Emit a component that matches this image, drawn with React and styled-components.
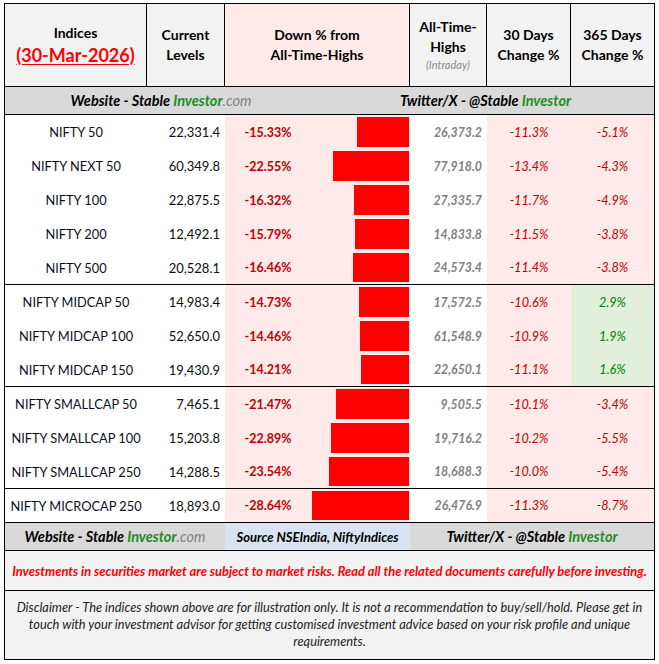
import React from 'react'
import styled, { createGlobalStyle } from 'styled-components'

const GlobalStyle = createGlobalStyle`
  body {
    margin: 0;
    background: #fff;
    font-family: Lato, "Open Sans", sans-serif;
  }
`

const groups = [
  [
    ['NIFTY 50', '22,331.4', 15.33, '26,373.2', '-11.3%', '-5.1%'],
    ['NIFTY NEXT 50', '60,349.8', 22.55, '77,918.0', '-13.4%', '-4.3%'],
    ['NIFTY 100', '22,875.5', 16.32, '27,335.7', '-11.7%', '-4.9%'],
    ['NIFTY 200', '12,492.1', 15.79, '14,833.8', '-11.5%', '-3.8%'],
    ['NIFTY 500', '20,528.1', 16.46, '24,573.4', '-11.4%', '-3.8%'],
  ],
  [
    ['NIFTY MIDCAP 50', '14,983.4', 14.73, '17,572.5', '-10.6%', '2.9%'],
    ['NIFTY MIDCAP 100', '52,650.0', 14.46, '61,548.9', '-10.9%', '1.9%'],
    ['NIFTY MIDCAP 150', '19,430.9', 14.21, '22,650.1', '-11.1%', '1.6%'],
  ],
  [
    ['NIFTY SMALLCAP 50', '7,465.1', 21.47, '9,505.5', '-10.1%', '-3.4%'],
    ['NIFTY SMALLCAP 100', '15,203.8', 22.89, '19,716.2', '-10.2%', '-5.5%'],
    ['NIFTY SMALLCAP 250', '14,288.5', 23.54, '18,688.3', '-10.0%', '-5.4%'],
  ],
  [
    ['NIFTY MICROCAP 250', '18,893.0', 28.64, '26,476.9', '-11.3%', '-8.7%'],
  ],
]

function Brand({ dotcom }) {
  return (
    <>
      Stable <Green>Investor</Green>
      {dotcom && <Gray>.com</Gray>}
    </>
  )
}

function App() {
  return (
    <Page>
      <GlobalStyle />
      <Table>
        <HeadRow>
          <HeadCell>
            <div>Indices</div>
            <DateText>(30-Mar-2026)</DateText>
          </HeadCell>
          <HeadCell>Current<br />Levels</HeadCell>
          <HeadCell $span={2} $bg="#ffe9e9">Down % from<br />All-Time-Highs</HeadCell>
          <HeadCell>
            <div>All-Time-<br />Highs</div>
            <Intraday>(Intraday)</Intraday>
          </HeadCell>
          <HeadCell>30 Days<br />Change %</HeadCell>
          <HeadCell $last>365 Days<br />Change %</HeadCell>
        </HeadRow>

        <Band>
          <BandText>Website - <Brand dotcom /></BandText>
          <BandText>Twitter/X - @<Brand /></BandText>
        </Band>

        {groups.map((rows, g) => (
          <Group key={g}>
            {rows.map(([name, level, down, ath, d30, d365]) => (
              <Row key={name}>
                <Name>{name}</Name>
                <Level>{level}</Level>
                <Down>-{down.toFixed(2)}%</Down>
                <BarCell>
                  <Bar style={{ width: Math.round(down * 3.39) }} />
                </BarCell>
                <Ath>{ath}</Ath>
                <Change>{d30}</Change>
                <Change $up={g === 1}>{d365}</Change>
              </Row>
            ))}
          </Group>
        ))}

        <FootBand>
          <FootCell $bg="#d9d9d9">Website - <Brand dotcom /></FootCell>
          <FootCell $bg="#dae3f3" $small>Source NSEIndia, NiftyIndices</FootCell>
          <FootCell $bg="#d9d9d9">Twitter/X - @<Brand /></FootCell>
        </FootBand>

        <Risk>
          Investments in securities market are subject to market risks. Read all the related documents carefully before investing.
        </Risk>

        <Disclaimer>
          Disclaimer - The indices shown above are for illustration only. It is not a recommendation to buy/sell/hold. Please get in touch with your investment advisor for getting customised investment advice based on your risk profile and unique requirements.
        </Disclaimer>
      </Table>
    </Page>
  )
}

export default App

const COLS = '142px 78px 86px 99px 77px 84px 1fr'

const Page = styled.div`
  padding: 3px 4px;
`

const Table = styled.div`
  width: 651px;
  border: 1px solid #000;
  box-sizing: border-box;
  color: #111;
`

const HeadRow = styled.div`
  display: grid;
  grid-template-columns: ${COLS};
  height: 82px;
  border-bottom: 1px solid #000;
`

const HeadCell = styled.div`
  grid-column: span ${({ $span }) => $span || 1};
  display: flex;
  flex-direction: column;
  align-items: center;
  justify-content: center;
  text-align: center;
  background: ${({ $bg }) => $bg || '#f2f2f2'};
  border-right: ${({ $last }) => ($last ? 'none' : '1px solid #000')};
  font-weight: 700;
  font-size: 14px;
  line-height: 20px;
  color: #000;
`

const DateText = styled.div`
  color: #ff0000;
  font-size: 18px;
  line-height: 24px;
  text-decoration: underline;
  text-underline-offset: 2px;
`

const Intraday = styled.div`
  font-size: 11px;
  line-height: 16px;
  font-style: italic;
  font-weight: 400;
  color: #8c8c8c;
`

const Band = styled.div`
  display: grid;
  grid-template-columns: 312px 1fr;
  height: 27px;
  background: #d9d9d9;
  border-bottom: 1px solid #000;
`

const BandText = styled.div`
  display: flex;
  align-items: center;
  justify-content: center;
  white-space: pre;
  font-weight: 700;
  font-style: italic;
  font-size: 14.5px;
  color: #000;
`

const Green = styled.span`
  color: #1e8c1e;
`

const Gray = styled.span`
  color: #808080;
  font-weight: 400;
`

const Group = styled.div`
  border-bottom: 1px solid #000;
`

const Row = styled.div`
  display: grid;
  grid-template-columns: ${COLS};
  height: 34px;
  font-size: 13px;

  ${Group} > &:last-child {
    height: 33px;
  }
`

const Cell = styled.div`
  display: flex;
  align-items: center;
  white-space: nowrap;
`

const Name = styled(Cell)`
  justify-content: center;
  font-size: 12.8px;
  color: #0d0d1a;
`

const Level = styled(Cell)`
  justify-content: flex-end;
  padding-right: 5px;
  color: #0d0d0d;
`

const Down = styled(Cell)`
  justify-content: center;
  background: #ffe9e9;
  color: #c00000;
  font-weight: 700;
  font-size: 12.5px;
`

const BarCell = styled(Cell)`
  justify-content: flex-end;
  background: #ffe9e9;
  padding: 2px 1px 2px 0;
  box-sizing: border-box;
  align-items: stretch;
`

const Bar = styled.div`
  background: #ff0000;
`

const Ath = styled(Cell)`
  justify-content: flex-end;
  padding-right: 5px;
  font-style: italic;
  font-weight: 700;
  font-size: 12.3px;
  color: #808080;
`

const Change = styled(Cell)`
  justify-content: center;
  font-style: italic;
  font-size: 12.6px;
  background: ${({ $up }) => ($up ? '#e2efda' : '#ffe9e9')};
  color: ${({ $up }) => ($up ? '#008000' : '#c00000')};
`

const FootBand = styled.div`
  display: grid;
  grid-template-columns: 220px 185px 1fr;
  height: 27px;
  border-bottom: 1px solid #000;
`

const FootCell = styled.div`
  display: flex;
  align-items: center;
  justify-content: center;
  white-space: pre;
  background: ${({ $bg }) => $bg};
  font-weight: 700;
  font-style: italic;
  font-size: ${({ $small }) => ($small ? '13px' : '14.5px')};
  color: #000;
`

const Risk = styled.div`
  height: 39px;
  display: flex;
  align-items: center;
  justify-content: center;
  background: #f2f2f2;
  border-bottom: 1px solid #000;
  color: #ff0000;
  font-weight: 700;
  font-style: italic;
  font-size: 12.9px;
  white-space: nowrap;
`

const Disclaimer = styled.div`
  height: 68px;
  box-sizing: border-box;
  padding: 8px 8px 0;
  background: #f2f2f2;
  text-align: center;
  font-style: italic;
  font-size: 12.8px;
  line-height: 17px;
  color: #222;
`
